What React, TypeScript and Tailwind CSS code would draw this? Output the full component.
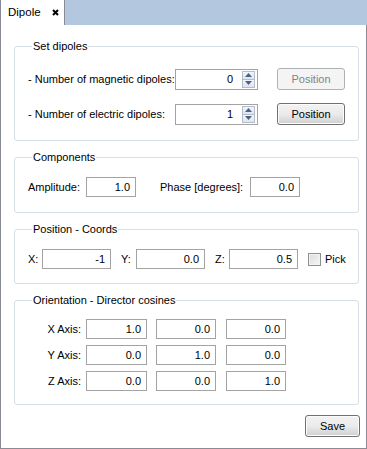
// Dipole panel - tabbed dialog with group boxes

const FONT = "font-['Liberation_Sans',Arial,sans-serif]";

function Field({ value, w }: { value: string; w: string }) {
  return (
    <div className={`${w} h-[20px] shrink-0 border border-[#a3a3a3] bg-white flex items-center justify-end pr-[5px]`}>
      {value}
    </div>
  );
}

function SpinBox({ value }: { value: string }) {
  return (
    <div className="w-[83px] h-[21px] shrink-0 border border-[#a3a3a3] bg-white flex items-center justify-end pr-[2px] gap-[9px]">
      <span>{value}</span>
      <div className="flex flex-col h-[17px] w-[13px]">
        <div className="flex-1 border border-[#b5bdc9] bg-gradient-to-b from-[#f3f6fb] to-[#dde4ee] flex items-center justify-center">
          <svg width="7" height="4" viewBox="0 0 7 4"><path d="M0 4 L3.5 0 L7 4 Z" fill="#4d6185" /></svg>
        </div>
        <div className="flex-1 border border-t-0 border-[#b5bdc9] bg-gradient-to-b from-[#f3f6fb] to-[#dde4ee] flex items-center justify-center">
          <svg width="7" height="4" viewBox="0 0 7 4"><path d="M0 0 L3.5 4 L7 0 Z" fill="#4d6185" /></svg>
        </div>
      </div>
    </div>
  );
}

function Button({ label, disabled, w }: { label: string; disabled?: boolean; w: string }) {
  if (disabled) {
    return (
      <div className={`${w} h-[22px] shrink-0 rounded-[3px] border border-[#adb2b5] bg-[#f4f4f4] text-[#838383] flex items-center justify-center`}>
        {label}
      </div>
    );
  }
  return (
    <div className={`${w} h-[22px] shrink-0 rounded-[3px] border border-[#707070] bg-gradient-to-b from-[#f2f2f2] via-[#ebebeb] to-[#cfcfcf] flex items-center justify-center shadow-[inset_0_0_0_1px_#fcfcfc]`}>
      {label}
    </div>
  );
}

function Group({ title, children, className }: { title: string; children: React.ReactNode; className: string }) {
  return (
    <fieldset className={`border border-[#d5dfe5] rounded-[3px] ${className}`}>
      <legend className="ml-[4px] px-[1px] leading-[13px]">{title}</legend>
      {children}
    </fieldset>
  );
}

export default function App() {
  return (
    <div className={`w-[367px] h-[449px] bg-white text-[11px] text-black ${FONT} flex flex-col`}>
      {/* Tab bar */}
      <div className="h-[25px] shrink-0 bg-[#b3c7df] flex">
        <div className="w-[65px] h-full bg-white border-l border-r border-[#898c95] flex items-center pl-[7px] gap-[11px]">
          <span className="text-[11.5px]">Dipole</span>
          <svg width="7" height="7" viewBox="0 0 7 7">
            <path d="M1 1 L6 6 M6 1 L1 6" stroke="#000" strokeWidth="2" />
          </svg>
        </div>
      </div>

      {/* Panel */}
      <div className="flex-1 border-l border-r border-b border-[#898c95] pl-[13px] pr-[7px] pt-[15px] flex flex-col">
        <Group title="Set dipoles" className="pt-[15px] pb-[15px] pl-[13px] pr-[13px] flex flex-col gap-[13px]">
          <div className="flex items-center">
            <span className="w-[147px]">- Number of magnetic dipoles:</span>
            <SpinBox value="0" />
            <div className="ml-auto"><Button label="Position" disabled w="w-[68px]" /></div>
          </div>
          <div className="flex items-center">
            <span className="w-[147px]">- Number of electric dipoles:</span>
            <SpinBox value="1" />
            <div className="ml-auto"><Button label="Position" w="w-[68px]" /></div>
          </div>
        </Group>

        <Group title="Components" className="mt-[10px] pt-[13px] pb-[15px] pl-[13px]">
          <div className="flex items-center">
            <span className="w-[58px]">Amplitude:</span>
            <Field value="1.0" w="w-[50px]" />
            <span className="ml-[24px] w-[90px]">Phase [degrees]:</span>
            <Field value="0.0" w="w-[50px]" />
          </div>
        </Group>

        <Group title="Position - Coords" className="mt-[10px] pt-[13px] pb-[14px] pl-[13px]">
          <div className="flex items-center">
            <span className="w-[14px]">X:</span>
            <Field value="-1" w="w-[69px]" />
            <span className="ml-[10px] w-[15px]">Y:</span>
            <Field value="0.0" w="w-[69px]" />
            <span className="ml-[10px] w-[14px]">Z:</span>
            <Field value="0.5" w="w-[69px]" />
            <div className="ml-[10px] w-[13px] h-[13px] border border-[#8e8f8f] bg-gradient-to-br from-[#dcdcdc] to-[#f7f7f7] shadow-[inset_0_0_0_1px_#f4f4f4]" />
            <span className="ml-[4px]">Pick</span>
          </div>
        </Group>

        <Group title="Orientation - Director cosines" className="mt-[10px] pt-[12px] pb-[13px] pl-[13px] flex flex-col gap-[6px]">
          {[
            ['X Axis:', '1.0', '0.0', '0.0'],
            ['Y Axis:', '0.0', '1.0', '0.0'],
            ['Z Axis:', '0.0', '0.0', '1.0'],
          ].map(([label, a, b, c]) => (
            <div key={label} className="flex items-center">
              <span className="w-[58px] text-right pr-[5px]">{label}</span>
              <Field value={a} w="w-[61px]" />
              <div className="ml-[9px]"><Field value={b} w="w-[60px]" /></div>
              <div className="ml-[10px]"><Field value={c} w="w-[60px]" /></div>
            </div>
          ))}
        </Group>

        <div className="mt-[10px] flex justify-end -mr-[1px]">
          <Button label="Save" w="w-[55px]" />
        </div>
      </div>
    </div>
  );
}
